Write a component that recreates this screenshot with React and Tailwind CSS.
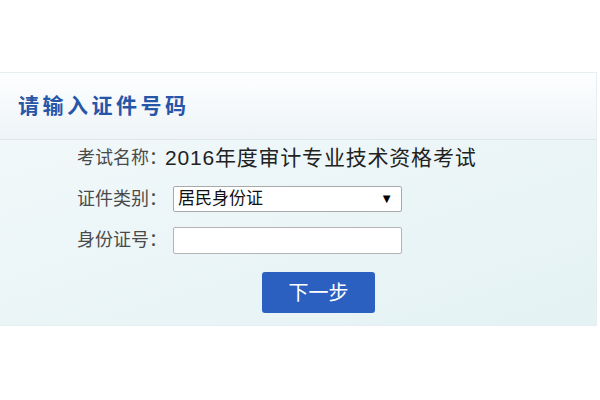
export default function App() {
  return (
    <div
      className="w-[600px] h-[400px] bg-white pt-[72px]"
      style={{ fontFamily: '"Liberation Sans", "Noto Sans CJK SC", sans-serif' }}
    >
      <div className="w-[597px] border border-[#e6eef1] border-l-0">
        <div className="h-[67px] flex items-center pl-[18px] bg-gradient-to-b from-[#fdfeff] to-[#eef4f7] border-b border-[#dde6ea]">
          <h1 className="text-[21px] font-bold tracking-[3.5px] text-[#2656a8]">请输入证件号码</h1>
        </div>
        <div className="bg-gradient-to-br from-[#f1f8fa] to-[#e4f2f3] pl-[77px] pt-[5px] pb-[12px]">
          <div className="flex items-center h-[26px] whitespace-nowrap">
            <span className="w-[88px] shrink-0 text-[18px] text-[#4a4a4a]">考试名称：</span>
            <span className="text-[21px] tracking-[0.8px] text-[#222]">2016年度审计专业技术资格考试</span>
          </div>
          <div className="flex items-center h-[26px] mt-[15px] whitespace-nowrap">
            <span className="w-[96px] shrink-0 text-[18px] text-[#4a4a4a]">证件类别：</span>
            <div className="w-[229px] h-[26px] bg-white border border-[#a9a9a9] rounded-[2px] flex items-center justify-between pl-[4px] pr-[8px]">
              <span className="text-[17px] text-[#111]">居民身份证</span>
              <span className="text-[13px] text-black">▼</span>
            </div>
          </div>
          <div className="flex items-center h-[27px] mt-[15px] whitespace-nowrap">
            <span className="w-[96px] shrink-0 text-[18px] text-[#4a4a4a]">身份证号：</span>
            <input
              className="w-[229px] h-[27px] bg-white border border-[#b4b4b4] rounded-[2px] outline-none"
              type="text"
            />
          </div>
          <button className="ml-[185px] mt-[18px] w-[113px] h-[41px] bg-[#2c60c0] rounded-[3px] text-white text-[20px] flex items-center justify-center">
            下一步
          </button>
        </div>
      </div>
    </div>
  );
}
